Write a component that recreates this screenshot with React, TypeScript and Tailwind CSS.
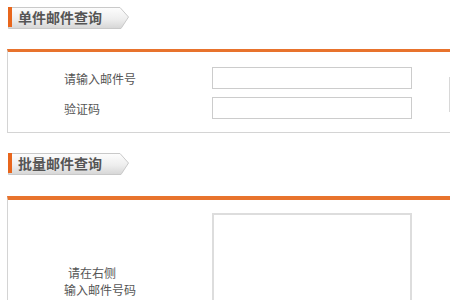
import React from "react";

const font = { fontFamily: '"Noto Sans CJK SC", "Noto Sans", sans-serif' };

function Tab({ title, id }: { title: string; id: string }) {
  return (
    <div className="relative ml-[8px] h-[22px] w-[124px]">
      <svg className="absolute left-0 top-0" width="124" height="22" viewBox="0 0 124 22">
        <defs>
          <linearGradient id={id} x1="0" y1="0" x2="0" y2="1">
            <stop offset="0" stopColor="#fdfdfd" />
            <stop offset="0.55" stopColor="#eeeeee" />
            <stop offset="1" stopColor="#d6d6d6" />
          </linearGradient>
        </defs>
        <polygon points="0.5,0.5 112,0.5 120.5,10 113,21.5 0.5,21.5" fill={`url(#${id})`} stroke="#c9c9c9" strokeWidth="1" />
        <rect x="0" y="0" width="4" height="20" fill="#e8661c" />
      </svg>
      <div className="relative pl-[10px] text-[14px] font-bold leading-[21px] text-[#555]">{title}</div>
    </div>
  );
}

export default function App() {
  return (
    <div className="h-[300px] w-[450px] overflow-hidden bg-white text-[12px] text-[#555]" style={font}>
      <div className="pt-[7px]">
        <Tab title="单件邮件查询" id="g1" />
      </div>
      <div className="ml-[7px] mt-[20px] border-t-[3px] border-l border-b border-t-[#e8732d] border-l-[#d4d4d4] border-b-[#d4d4d4] w-[460px] pt-[15px] pb-[13px]">
        <div className="flex">
          <div className="w-[204px] shrink-0 pl-[56px] flex flex-col gap-[8px]">
            <div className="h-[22px] leading-[24px]">请输入邮件号</div>
            <div className="h-[22px] leading-[24px]">验证码</div>
          </div>
          <div className="flex shrink-0 flex-col gap-[8px]">
            <div className="h-[22px] w-[200px] border border-[#cccccc]" />
            <div className="h-[22px] w-[200px] border border-[#cccccc]" />
          </div>
          <div className="ml-[37px] mt-[10px] h-[35px] w-[30px] shrink-0 border border-[#d8d8d8]" />
        </div>
      </div>
      <div className="pt-[20px]">
        <Tab title="批量邮件查询" id="g2" />
      </div>
      <div className="ml-[7px] mt-[21px] border-t-[4px] border-l border-t-[#e8732d] border-l-[#d4d4d4] w-[460px] pt-[13px]">
        <div className="flex">
          <div className="w-[204px] shrink-0 pl-[60px] pt-[51px] leading-[17px]">
            <div>请在右侧</div>
            <div className="-ml-[4px]">输入邮件号码</div>
            <div className="-ml-[4px] text-[#e8732d]">最多输入20个</div>
          </div>
          <div className="h-[120px] w-[200px] shrink-0 border-2 border-[#dddddd]" />
        </div>
      </div>
    </div>
  );
}
